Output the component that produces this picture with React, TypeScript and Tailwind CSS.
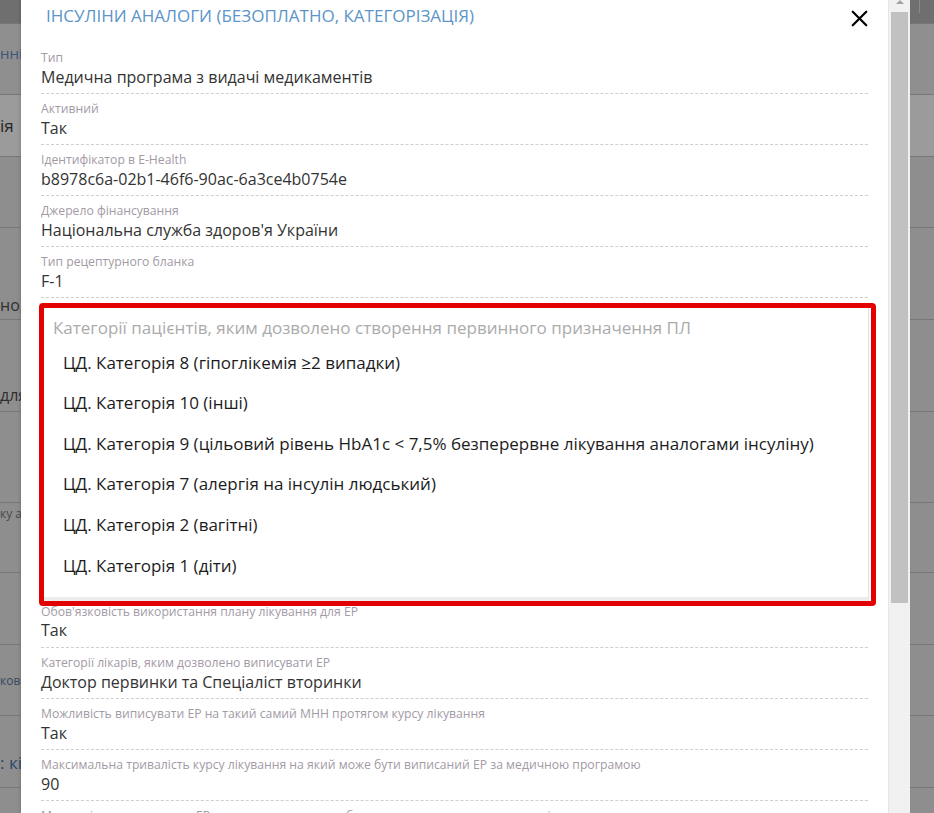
import { X } from "lucide-react";

type Field = {
  label: string;
  value: string;
};

const TOP_FIELDS: Field[] = [
  { label: "Тип", value: "Медична програма з видачі медикаментів" },
  { label: "Активний", value: "Так" },
  { label: "Ідентифікатор в E-Health", value: "b8978c6a-02b1-46f6-90ac-6a3ce4b0754e" },
  { label: "Джерело фінансування", value: "Національна служба здоров'я України" },
  { label: "Тип рецептурного бланка", value: "F-1" },
];

const BOTTOM_FIELDS: Field[] = [
  { label: "Категорії лікарів, яким дозволено виписувати ЕР", value: "Доктор первинки та Спеціаліст вторинки" },
  { label: "Можливість виписувати ЕР на такий самий МНН протягом курсу лікування", value: "Так" },
  { label: "Максимальна тривалість курсу лікування на який може бути виписаний ЕР за медичною програмою", value: "90" },
  { label: "Можливість виписування ЕР на медичну програму без попереднього призначення лікарем", value: "Ні" },
];

const CATEGORIES = [
  "ЦД. Категорія 8 (гіпоглікемія ≥2 випадки)",
  "ЦД. Категорія 10 (інші)",
  "ЦД. Категорія 9 (цільовий рівень HbA1c < 7,5% безперервне лікування аналогами інсуліну)",
  "ЦД. Категорія 7 (алергія на інсулін людський)",
  "ЦД. Категорія 2 (вагітні)",
  "ЦД. Категорія 1 (діти)",
];

// rows of the page behind the overlay, only the edges show
const BG_ROWS = [
  { cls: "h-[24px] bg-[#6f6f6f]", text: "", tone: "" },
  { cls: "h-[71px] bg-[#8f8f8f]", text: "нні", tone: "pt-[19px] text-[15px] text-[#3b5877]" },
  { cls: "h-[62px] bg-[#9b9b9b]", text: "ія", tone: "pt-[21px] text-[17px] text-[#262626]" },
  { cls: "h-[71px] bg-[#8e8e8e]", text: "", tone: "" },
  { cls: "h-[92px] bg-[#8e8e8e]", text: "но,", tone: "pt-[67px] text-[16px] text-[#2e2e2e]" },
  { cls: "h-[92px] bg-[#8e8e8e]", text: "для", tone: "pt-[65px] text-[16px] text-[#2e2e2e]" },
  { cls: "h-[91px] bg-[#8e8e8e]", text: "", tone: "" },
  { cls: "h-[70px] bg-[#8e8e8e]", text: "ку а", tone: "pt-[1px] text-[12px] text-[#4a4a4a]" },
  { cls: "h-[72px] bg-[#8e8e8e]", text: "", tone: "" },
  { cls: "h-[71px] bg-[#8e8e8e]", text: "кова", tone: "pt-[26px] text-[12px] text-[#34495e]" },
  { cls: "h-[72px] bg-[#8e8e8e]", text: ": кі", tone: "pt-[37px] text-[17px] text-[#29486a]" },
  { cls: "h-[40px] bg-[#8e8e8e]", text: "", tone: "" },
];

function FieldRow({ label, value }: Field) {
  return (
    <div className="border-b border-dashed border-[#cfcfcf] pt-[7px] pb-[5px]">
      <div className="h-[16px] truncate text-[12.2px] leading-[16px] text-[#a39aa6]">{label}</div>
      <div className="h-[22px] text-[16px] leading-[22px] text-[#333333]">{value}</div>
    </div>
  );
}

export default function App() {
  return (
    <div
      className="relative h-[813px] w-[934px] overflow-hidden bg-[#8e8e8e]"
      style={{ fontFamily: "'Open Sans', 'Noto Sans', sans-serif" }}
    >
      {/* page under the overlay */}
      <div className="flex flex-col">
        {BG_ROWS.map((row, i) => (
          <div key={i} className={`flex border-b border-[#777777] ${row.cls}`}>
            {row.text ? (
              <div className={`w-[21px] overflow-hidden whitespace-nowrap leading-[20px] ${row.tone}`}>
                {row.text}
              </div>
            ) : null}
            {i === 0 ? <div className="mr-[14px] ml-auto h-[13px] w-px bg-[#8a8a8a]" /> : null}
          </div>
        ))}
      </div>

      {/* modal with its own scroll track */}
      <div className="absolute top-0 left-[21px] flex h-[813px]">
        <div className="w-[867px] bg-white px-[20px] shadow-[-1px_0_3px_rgba(0,0,0,0.15)]">
          <div className="flex h-[44px] items-start justify-between pt-[4px] pl-[5px]">
            <h2 className="text-[17px] leading-[24px] font-normal text-[#5b95c9] uppercase">
              Інсуліни аналоги (безоплатно, категорізація)
            </h2>
            <button type="button" className="mt-[1px] mr-[-5px] text-black">
              <X size={27} strokeWidth={2} />
            </button>
          </div>

          <div className="-mt-[1px]">
            {TOP_FIELDS.map((f) => (
              <FieldRow key={f.label} {...f} />
            ))}
          </div>

          <div className="mt-[5px] -ml-[2px] -mr-[8px] h-[303px] rounded-[4px] border-[5px] border-[#e30000]">
            <div className="mr-[2px] h-full border-r border-b-[4px] border-r-[#e3e3e3] border-b-[#ececec] bg-white pt-[8px] pl-[9px]">
              <div className="h-[24px] text-[17px] leading-[24px] text-[#ababab]">
                Категорії пацієнтів, яким дозволено створення первинного призначення ПЛ
              </div>
              <ul className="pt-[2px] pl-[10px]">
                {CATEGORIES.map((c) => (
                  <li key={c} className="flex h-[40.6px] items-center text-[17px] text-[#1c1c1c]">
                    {c}
                  </li>
                ))}
              </ul>
            </div>
          </div>

          <div className="-mt-[1px] border-b border-dashed border-[#cfcfcf] pb-[6px]">
            <div className="h-[14px] truncate text-[12.2px] leading-[14px] text-[#a39aa6]">
              Обов'язковість використання плану лікування для ЕР
            </div>
            <div className="h-[22px] text-[16px] leading-[22px] text-[#333333]">Так</div>
          </div>

          {BOTTOM_FIELDS.map((f) => (
            <FieldRow key={f.label} {...f} />
          ))}
        </div>

        <div className="relative w-[22px] border-l border-[#e6e6e6] bg-[#f1f1f1]">
          <div className="mx-auto h-0 w-0 border-x-[4px] border-b-[4px] border-x-transparent border-b-[#a3a3a3]" />
          <div className="mx-[2px] mt-[8px] h-[591px] bg-[#c1c1c1]" />
        </div>
      </div>
    </div>
  );
}
